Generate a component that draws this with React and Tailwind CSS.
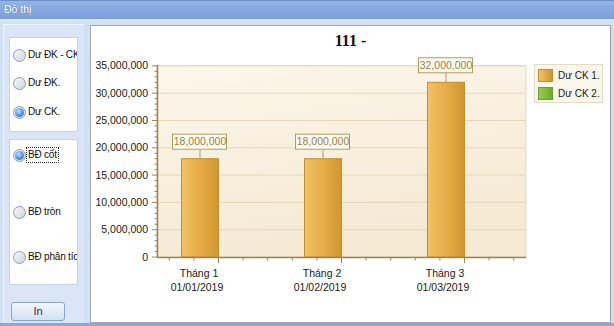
import React from "react";

const Y = (v) => 255 - (v / 5e6) * 27.3;

const bars = [
  { value: 18000000, label: "18,000,000", month: "Tháng 1", date: "01/01/2019" },
  { value: 18000000, label: "18,000,000", month: "Tháng 2", date: "01/02/2019" },
  { value: 32000000, label: "32,000,000", month: "Tháng 3", date: "01/03/2019" },
];

const Radio = ({ checked, label, focus }) => (
  <div className="flex items-center h-[16px] whitespace-nowrap">
    <span className="w-[13px] h-[13px] shrink-0 rounded-full border border-[#8d9db4] bg-gradient-to-br from-[#f4f6f9] to-[#cfd6e0] flex items-center justify-center">
      {checked && (
        <span className="w-[9px] h-[9px] rounded-full bg-[radial-gradient(circle_at_40%_35%,#bfe0ff,#3f8fe0_60%,#2a6fc4)]" />
      )}
    </span>
    <span
      className={
        "ml-[1px] px-[1px] leading-[14px] text-[10px] tracking-[-0.2px] text-[#111] " +
        (focus ? "outline outline-1 outline-dotted outline-[#333]" : "")
      }
    >
      {label}
    </span>
  </div>
);

const Chart = () => {
  const majors = [0, 1, 2, 3, 4, 5, 6, 7];
  const minors = [];
  for (let k = 0; k < 7; k++) for (let j = 1; j < 5; j++) minors.push(k * 5e6 + j * 1e6);
  const xMinor = [];
  for (let m = -2; m <= 12; m++) {
    const x = 218.5 + 24.6 * m;
    if (m % 5 !== 0 && x > 158 && x < 526) xMinor.push(x);
  }
  return (
    <svg width="439" height="272" viewBox="91 50 439 272" fontFamily="Liberation Sans, Arial, sans-serif">
      <defs>
        <linearGradient id="plotbg" x1="0" y1="0" x2="0.3" y2="1">
          <stop offset="0" stopColor="#fcf6ea" />
          <stop offset="1" stopColor="#f5e9d3" />
        </linearGradient>
        <linearGradient id="bar" x1="0" y1="0" x2="1" y2="0">
          <stop offset="0" stopColor="#f1c264" />
          <stop offset="0.5" stopColor="#e6ad48" />
          <stop offset="1" stopColor="#d0962f" />
        </linearGradient>
      </defs>
      <rect x="157" y="63.5" width="369" height="191.5" fill="url(#plotbg)" stroke="#e5d8bd" />
      {majors.slice(1).map((k) => (
        <line key={k} x1="157" x2="526" y1={Y(k * 5e6)} y2={Y(k * 5e6)} stroke="#e6d7ba" />
      ))}
      {bars.map((b, i) => {
        const top = Y(b.value);
        const cx = 200 + 123 * i;
        return (
          <g key={i}>
            <rect x={181.5 + 123 * i} y={top} width="37" height={255 - top} fill="url(#bar)" stroke="#c28f35" />
            <line x1={cx} x2={cx} y1={top - 9.5} y2={top} stroke="#b39a62" />
            <rect x={cx - 27.5} y={top - 24.5} width="54" height="15" fill="#fffcf3" stroke="#b59b5e" />
            <text x={cx} y={top - 13.5} textAnchor="middle" fontSize="10.5" fill="#9a7e45">
              {b.label}
            </text>
            <text x={cx - 1} y="275" textAnchor="middle" fontSize="10.5" fill="#1a1a1a">
              {b.month}
            </text>
            <text x={cx - 3} y="289" textAnchor="middle" fontSize="10.5" fill="#1a1a1a">
              {b.date}
            </text>
          </g>
        );
      })}
      <line x1="157.5" x2="157.5" y1="63" y2="256" stroke="#978659" strokeWidth="1.5" />
      <line x1="157" x2="526" y1="255.5" y2="255.5" stroke="#978659" strokeWidth="1.5" />
      {majors.map((k) => (
        <g key={k}>
          <line x1="152" x2="157" y1={Y(k * 5e6)} y2={Y(k * 5e6)} stroke="#978659" />
          <text x="148" y={Y(k * 5e6) + 3.5} textAnchor="end" fontSize="10.5" fill="#1a1a1a">
            {k === 0 ? "0" : (k * 5000000).toLocaleString("en-US")}
          </text>
        </g>
      ))}
      {minors.map((v) => (
        <line key={v} x1="154.5" x2="157" y1={Y(v)} y2={Y(v)} stroke="#978659" />
      ))}
      {[218.5, 341.5, 464.5].map((x) => (
        <line key={x} x1={x} x2={x} y1="255" y2="261" stroke="#978659" />
      ))}
      {xMinor.map((x) => (
        <line key={x} x1={x} x2={x} y1="255" y2="258.5" stroke="#978659" />
      ))}
    </svg>
  );
};

export default function App() {
  return (
    <div className="w-[614px] h-[326px] flex flex-col bg-[#d2e0f3] overflow-hidden font-['Liberation_Sans',Arial,sans-serif]">
      {/* Title bar */}
      <div className="h-[19px] shrink-0 border-t border-[#6d90c9] bg-gradient-to-b from-[#93b3e4] to-[#7a9fd9] flex items-center px-[4px]">
        <span className="text-[10.5px] text-white [text-shadow:0_0_1px_#4a6a9e]">Đồ thị</span>
      </div>

      <div className="flex-1 flex pt-[3px] px-[3px] gap-[6px] border-t-2 border-[#d8e6f7] min-h-0">
        {/* Left panel */}
        <div className="w-[81px] shrink-0 flex flex-col border-l border-t border-[#eef4fb] bg-[#dae6f5] pl-[5px] pt-[12px]">
          <div className="w-[69px] h-[95px] bg-white border border-[#c3d3e8] pl-[3px] pt-[9px] flex flex-col gap-[12px] overflow-hidden">
            <Radio label="Dư ĐK - CK" />
            <Radio label="Dư ĐK." />
            <div className="mt-[1px]">
              <Radio label="Dư CK." checked />
            </div>
          </div>
          <div className="w-[69px] h-[146px] mt-[7px] bg-white border border-[#c3d3e8] pl-[3px] pt-[7px] flex flex-col overflow-hidden">
            <Radio label="BĐ cốt" checked focus />
            <div className="mt-[41px]">
              <Radio label="BĐ tròn" />
            </div>
            <div className="mt-[29px]">
              <Radio label="BĐ phân tích" />
            </div>
          </div>
          <button className="mt-[17px] ml-[2px] w-[54px] h-[19px] rounded-[3px] border border-[#8aa5c9] bg-gradient-to-b from-[#f3f7fd] to-[#d3e1f3] text-[11px] text-[#1d3557] leading-none">
            In
          </button>
        </div>

        {/* Chart panel */}
        <div className="flex-1 mt-[1px] bg-white border border-[#a4aab2] border-r-[#9c9c9c] flex flex-col">
          <div className="h-[26px] shrink-0 flex items-end justify-center pb-[3px]">
            <span className="font-['Liberation_Serif',serif] font-bold text-[16px] leading-none text-[#111]">111 -</span>
          </div>
          <div className="flex">
            <Chart />
            <div className="ml-[4px] mt-[12px] w-[69px] h-[39px] border border-[#e6dbc5] bg-[#fbf6ec] flex flex-col pl-[3px] pt-[4px] gap-[5px]">
              <div className="flex items-center gap-[5px]">
                <span className="w-[15px] h-[13px] border border-[#c28f35] bg-gradient-to-r from-[#f1c264] to-[#d0962f]" />
                <span className="text-[10px] leading-none text-[#1a1a1a]">Dư CK 1.</span>
              </div>
              <div className="flex items-center gap-[5px]">
                <span className="w-[15px] h-[13px] border border-[#6a9e2e] bg-gradient-to-r from-[#98cc4a] to-[#6cab2c]" />
                <span className="text-[10px] leading-none text-[#1a1a1a]">Dư CK 2.</span>
              </div>
            </div>
          </div>
        </div>
      </div>

      <div className="h-[3px] shrink-0 bg-[#86a9de]" />
    </div>
  );
}
